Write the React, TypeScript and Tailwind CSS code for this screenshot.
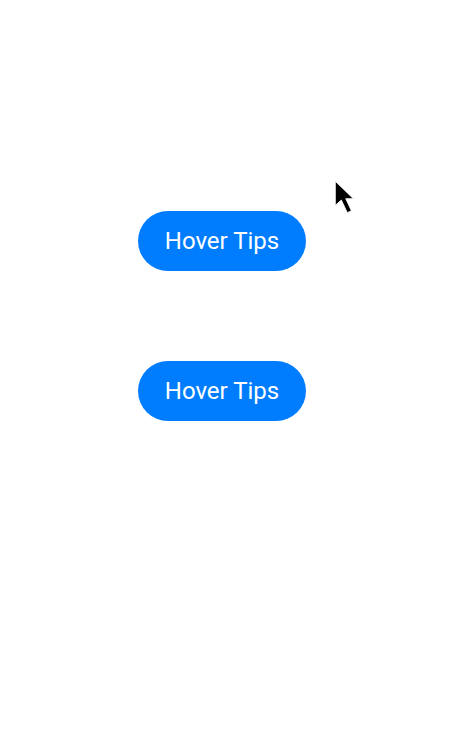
export default function App() {
  return (
    <div className="relative h-[745px] w-[471px] bg-white" style={{ fontFamily: "Roboto, 'Noto Sans', sans-serif" }}>
      <div className="flex flex-col items-start gap-[90px] pl-[138px] pt-[211px]">
        <button className="flex h-[60px] w-[168px] items-center justify-center rounded-full bg-[#007dff] text-[24px] text-white">
          Hover Tips
        </button>
        <button className="flex h-[60px] w-[168px] items-center justify-center rounded-full bg-[#007dff] text-[24px] text-white">
          Hover Tips
        </button>
      </div>

      {/* mouse pointer */}
      <svg className="absolute left-[334px] top-[180px]" width="22" height="34" viewBox="-1 -1 16.5 25.5">
        <path d="M0 0 L0 18 L4.5 14 L9 23.5 L12 22 L7.8 13 L13.5 13 Z" fill="#000" stroke="#fff" strokeWidth="0.6" strokeLinejoin="round" />
      </svg>
    </div>
  );
}
